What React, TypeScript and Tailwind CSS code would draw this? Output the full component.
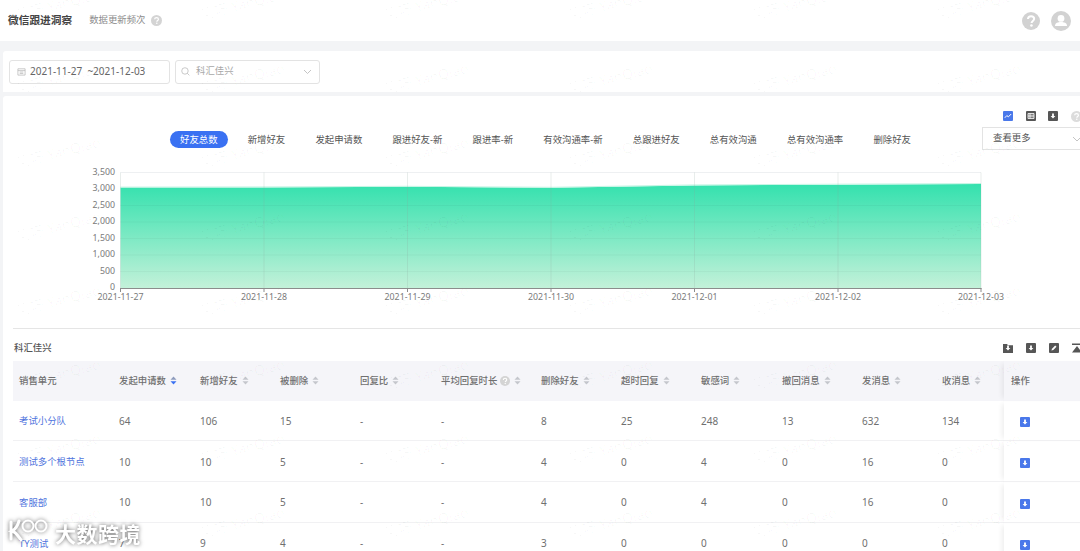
import React from "react";

const font = { fontFamily: '"Noto Sans", "Noto Sans CJK SC", sans-serif' };

function Sort({ active }: { active?: boolean }) {
  return (
    <svg width="7" height="9" viewBox="0 0 7 9" className="inline-block ml-[4px] align-[-1px] shrink-0">
      <path d="M3.5 0.5 L6.5 3.7 H0.5 Z" fill={active ? "#8d9bbd" : "#c4c6cc"} />
      <path d="M3.5 8.5 L6.5 5.3 H0.5 Z" fill={active ? "#3a71f2" : "#c4c6cc"} />
    </svg>
  );
}

function Help({ size = 10, color = "#d4d4d4" }: { size?: number; color?: string }) {
  return (
    <svg width={size} height={size} viewBox="0 0 20 20" className="shrink-0">
      <circle cx="10" cy="10" r="10" fill={color} />
      <path d="M6.6 7.8 C6.7 5.6 8.2 4.6 10.1 4.6 C12.1 4.6 13.5 5.8 13.5 7.5 C13.5 9.9 10.6 9.9 10.6 12.2" fill="none" stroke="#fff" strokeWidth="2.2" />
      <circle cx="10.5" cy="15" r="1.4" fill="#fff" />
    </svg>
  );
}

function Square({ color = "#565656", kind }: { color?: string; kind: "line" | "table" | "down" | "folder" | "edit" | "top" }) {
  return (
    <svg width="10" height="10" viewBox="0 0 10 10" className="shrink-0">
      {kind === "folder" ? (
        <path d="M0 1 H4 L5 2.2 H10 V10 H0 Z" fill={color} />
      ) : kind === "top" ? (
        <path d="M0 0.5 H10 V2 H0 Z M5 3 L10 9.5 H0 Z" fill={color} />
      ) : (
        <rect width="10" height="10" rx="1" fill={color} />
      )}
      {kind === "line" && <path d="M1.8 6.8 L3.8 4.6 L5.4 5.8 L8.2 3" fill="none" stroke="#fff" strokeWidth="1" />}
      {kind === "table" && (
        <path d="M2 2.5 H8 V7.5 H2 Z M2 4.2 H8 M2 5.8 H8 M4 2.5 V7.5" fill="none" stroke="#fff" strokeWidth="0.8" />
      )}
      {(kind === "down" || kind === "folder") && <path d="M4.1 2.6 H5.9 V5 H7.4 L5 7.6 L2.6 5 H4.1 Z" fill="#fff" />}
      {kind === "edit" && <path d="M2.4 7.6 L3 5.7 L6.2 2.5 L7.5 3.8 L4.3 7 Z" fill="#fff" />}
    </svg>
  );
}

const tabs = ["好友总数", "新增好友", "发起申请数", "跟进好友-新", "跟进率-新", "有效沟通率-新", "总跟进好友", "总有效沟通", "总有效沟通率", "删除好友"];

const columns: { label: string; width: number; sort?: boolean; active?: boolean; help?: boolean }[] = [
  { label: "销售单元", width: 100 },
  { label: "发起申请数", width: 81, sort: true, active: true },
  { label: "新增好友", width: 80, sort: true },
  { label: "被删除", width: 80, sort: true },
  { label: "回复比", width: 81, sort: true },
  { label: "平均回复时长", width: 100, sort: true, help: true },
  { label: "删除好友", width: 80, sort: true },
  { label: "超时回复", width: 80, sort: true },
  { label: "敏感词", width: 81, sort: true },
  { label: "撤回消息", width: 80, sort: true },
  { label: "发消息", width: 80, sort: true },
  { label: "收消息", width: 68, sort: true },
  { label: "操作", width: 90 },
];

const rows = [
  ["考试小分队", "64", "106", "15", "-", "-", "8", "25", "248", "13", "632", "134"],
  ["测试多个根节点", "10", "10", "5", "-", "-", "4", "0", "4", "0", "16", "0"],
  ["客服部", "10", "10", "5", "-", "-", "4", "0", "4", "0", "16", "0"],
  ["TY测试", "7", "9", "4", "-", "-", "3", "0", "0", "0", "0", "0"],
];

const xs = [120.5, 264, 407.5, 551, 694.5, 838, 981];
const dates = ["2021-11-27", "2021-11-28", "2021-11-29", "2021-11-30", "2021-12-01", "2021-12-02", "2021-12-03"];
const tops = [187.6, 187.4, 186.8, 187.8, 185.4, 184.7, 184];
const yLabels = ["3,500", "3,000", "2,500", "2,000", "1,500", "1,000", "500", "0"];

function Chart() {
  const O = 160;
  const bottom = 288 - O;
  const top = 172.5 - O;
  const area = `M${xs[0]} ${bottom} ` + xs.map((x, i) => `L${x} ${tops[i] - O}`).join(" ") + ` L${xs[6]} ${bottom} Z`;
  return (
    <svg width="1080" height="160" viewBox="0 0 1080 160" className="block -ml-[3px]">
      <defs>
        <linearGradient id="g" x1="0" y1="0" x2="0" y2="1">
          <stop offset="0" stopColor="#34e1ae" />
          <stop offset="1" stopColor="#c3f1d9" />
        </linearGradient>
      </defs>
      {yLabels.map((l, i) => {
        const y = top + (i * (bottom - top)) / 7;
        return <line key={l} x1={xs[0]} x2={xs[6]} y1={y} y2={y} stroke="#eef0f2" strokeWidth="1" />;
      })}
      <path d={area} fill="url(#g)" />
      <path d={xs.map((x, i) => `${i ? "L" : "M"}${x} ${tops[i] - O - 0.5}`).join(" ")} fill="none" stroke="#c4f5e4" strokeWidth="1" />
      {yLabels.slice(2, 7).map((l, i) => {
        const y = top + ((i + 2) * (bottom - top)) / 7;
        return <line key={l} x1={xs[0]} x2={xs[6]} y1={y} y2={y} stroke="#000" strokeOpacity="0.03" strokeWidth="1" />;
      })}
      {xs.map((x) => (
        <line key={x} x1={x} x2={x} y1={top} y2={bottom} stroke="#8aa59c" strokeOpacity="0.2" strokeWidth="1" />
      ))}
      <line x1={xs[0]} x2={xs[6] + 0.5} y1={bottom + 0.5} y2={bottom + 0.5} stroke="#8c8c8c" strokeWidth="1" />
      {xs.map((x) => (
        <line key={x} x1={x} x2={x} y1={bottom} y2={bottom + 4} stroke="#8c8c8c" strokeWidth="1" />
      ))}
      {yLabels.map((l, i) => (
        <text key={l} x="115" y={top + (i * (bottom - top)) / 7 + 2} textAnchor="end" fontSize="8.8" fill="#7a7a7a" style={font}>
          {l}
        </text>
      ))}
      {dates.map((d, i) => (
        <text key={d} x={xs[i]} y={bottom + 11.5} textAnchor="middle" fontSize="8.8" fill="#7a7a7a" style={font}>
          {d}
        </text>
      ))}
    </svg>
  );
}

function Watermarks() {
  const items = Array.from({ length: 48 });
  return (
    <div className="absolute left-[15px] -top-[9px] grid grid-cols-[repeat(6,184px)] auto-rows-[74px] pointer-events-none z-10">
      {items.map((_, i) => (
        <div key={i} className="h-[24px] w-[90px] flex items-center whitespace-nowrap text-[14px] text-[#000]/[0.03] -rotate-[14deg]">
          问巧 YanQiao
        </div>
      ))}
    </div>
  );
}

function Logo() {
  return (
    <div className="absolute left-[8px] bottom-[2px] z-20 flex items-center gap-[7px] drop-shadow-[0_0_2px_rgba(0,0,0,0.6)]">
      <svg width="40" height="30" viewBox="0 0 40 30">
        <path d="M3 3 V20 M11 2 C9 9 6 11 4 12 C8 13 10 17 13 21" fill="none" stroke="#fff" strokeWidth="3" strokeLinecap="round" />
        <circle cx="20" cy="7" r="5.5" fill="none" stroke="#fff" strokeWidth="2" />
        <circle cx="33" cy="7" r="5.5" fill="none" stroke="#fff" strokeWidth="2" />
      </svg>
      <span className="text-[21px] leading-none font-bold tracking-[0.5px] text-white">大数跨境</span>
    </div>
  );
}

export default function App() {
  return (
    <div style={font} className="relative w-[1080px] h-[551px] overflow-hidden bg-[#f3f4f6] text-[9.4px] text-[#666]">
      <Watermarks />
      <Logo />
      <header className="h-[41px] bg-white flex items-center pl-[8px] pr-[9px]">
        <h1 className="text-[10.7px] font-bold text-[#444]">微信跟进洞察</h1>
        <span className="ml-[17px] text-[#8c8c8c]">数据更新频次</span>
        <span className="ml-[6px]"><Help size={11} /></span>
        <span className="ml-auto mr-[11px]"><Help size={18} color="#d2d2d2" /></span>
        <svg width="20" height="20" viewBox="0 0 20 20">
          <circle cx="10" cy="10" r="10" fill="#d2d2d2" />
          <circle cx="10" cy="7.4" r="3.4" fill="#fff" />
          <path d="M4 15 C4 11.8 7 11 10 11 C13 11 16 11.8 16 15 Z" fill="#fff" />
        </svg>
      </header>

      <section className="mt-[10px] ml-[3px] h-[41px] bg-white rounded-tl-[3px] flex items-center pl-[6px] gap-[5px]">
        <div className="w-[161px] h-[24px] border border-[#e3e3e3] rounded-[3px] flex items-center pl-[7px] text-[10px] text-[#666] whitespace-pre">
          <svg width="9" height="9" viewBox="0 0 10 10" className="mr-[4px]">
            <path d="M1 2 H9 V9 H1 Z M1 4 H9 M3 5.6 H7 M3 7.2 H7" fill="none" stroke="#b5b5b5" strokeWidth="0.8" />
          </svg>
          {"2021-11-27  ~2021-12-03"}
        </div>
        <div className="w-[145px] h-[24px] border border-[#e3e3e3] rounded-[3px] flex items-center pl-[5px] pr-[6px] text-[#a8a8a8]">
          <svg width="9" height="9" viewBox="0 0 10 10" className="mr-[6px]">
            <circle cx="4.4" cy="4.4" r="3.6" fill="none" stroke="#b5b5b5" strokeWidth="0.8" />
            <path d="M7 7 L9.3 9.3" stroke="#b5b5b5" strokeWidth="0.8" />
          </svg>
          科汇佳兴
          <svg width="9" height="6" viewBox="0 0 9 6" className="ml-auto mr-[1px]">
            <path d="M1 1 L4.5 4.5 L8 1" fill="none" stroke="#bdbdbd" strokeWidth="0.9" />
          </svg>
        </div>
      </section>

      <main className="mt-[4px] ml-[3px] w-[1120px] h-[470px] bg-white rounded-tl-[3px]">
        <div className="pt-[15px] pl-[1000px] flex items-center gap-[12.5px] h-[25px]">
          <Square kind="line" color="#4a78ea" />
          <Square kind="table" />
          <Square kind="down" />
          <Help size={11} color="#dcdcdc" />
        </div>
        <div className="flex items-start mt-[6px] h-[33px]">
          <div className="ml-[167px] w-[812px] flex items-center gap-[10.2px] mt-[4px]">
            {tabs.map((t, i) => (
              <span key={t} className={i === 0 ? "h-[17px] px-[10px] pt-[1px] rounded-full bg-[#3a71f2] text-white flex items-center whitespace-nowrap" : "h-[17px] px-[10px] pt-[2px] text-[#555] flex items-center whitespace-nowrap"}>
                {t}
              </span>
            ))}
          </div>
          <div className="w-[110px] shrink-0 h-[23px] border border-[#e3e3e3] flex items-center px-[10px] text-[#555] whitespace-nowrap">
            查看更多
            <svg width="10" height="6" viewBox="0 0 10 6" className="ml-[41px] shrink-0">
              <path d="M1 1 L5 5 L9 1" fill="none" stroke="#bdbdbd" strokeWidth="0.9" />
            </svg>
          </div>
        </div>
        <Chart />
        <div className="ml-[10px] mt-[8px] h-[1px] bg-[#e5e5e5]" />
        <div className="ml-[11px] mt-[11px] h-[21px] flex items-start">
          <span className="mt-[1px] font-medium text-[#555] leading-[14px]">科汇佳兴</span>
          <div className="ml-[951px] pt-[3px] flex items-center gap-[13px]">
            <Square kind="folder" />
            <Square kind="down" />
            <Square kind="edit" />
            <Square kind="top" />
          </div>
        </div>
        <table className="ml-[10px] table-fixed border-separate border-spacing-0 w-[1081px]">
          <colgroup>
            {columns.map((c) => (
              <col key={c.label} style={{ width: c.width }} />
            ))}
          </colgroup>
          <thead>
            <tr className="h-[39.5px] bg-[#f5f5f9] text-[#707070]">
              {columns.map((c, i) => (
                <th key={c.label} className={`font-medium text-left px-[6px] whitespace-nowrap ${i === 12 ? "pl-[7px] shadow-[-5px_0_5px_-3px_rgba(0,0,0,0.07)]" : ""}`}>
                  <span className="inline-flex items-center">
                    {c.label}
                    {c.help && <span className="ml-[3px]"><Help size={10} /></span>}
                    {c.sort && <Sort active={c.active} />}
                  </span>
                </th>
              ))}
            </tr>
          </thead>
          <tbody>
            {rows.map((r) => (
              <tr key={r[0]} className="h-[40.8px]">
                {r.map((v, i) => (
                  <td key={i} className={`border-b border-[#f1f1f3] px-[6px] pt-[2px] whitespace-nowrap ${i === 0 ? "text-[#4f74dd]" : "text-[10px] text-[#707070]"}`}>
                    {v}
                  </td>
                ))}
                <td className="border-b border-[#f1f1f3] pl-[16px] pt-[4px] shadow-[-5px_0_5px_-3px_rgba(0,0,0,0.07)]">
                  <Square kind="down" color="#4a78ea" />
                </td>
              </tr>
            ))}
          </tbody>
        </table>
      </main>
    </div>
  );
}
